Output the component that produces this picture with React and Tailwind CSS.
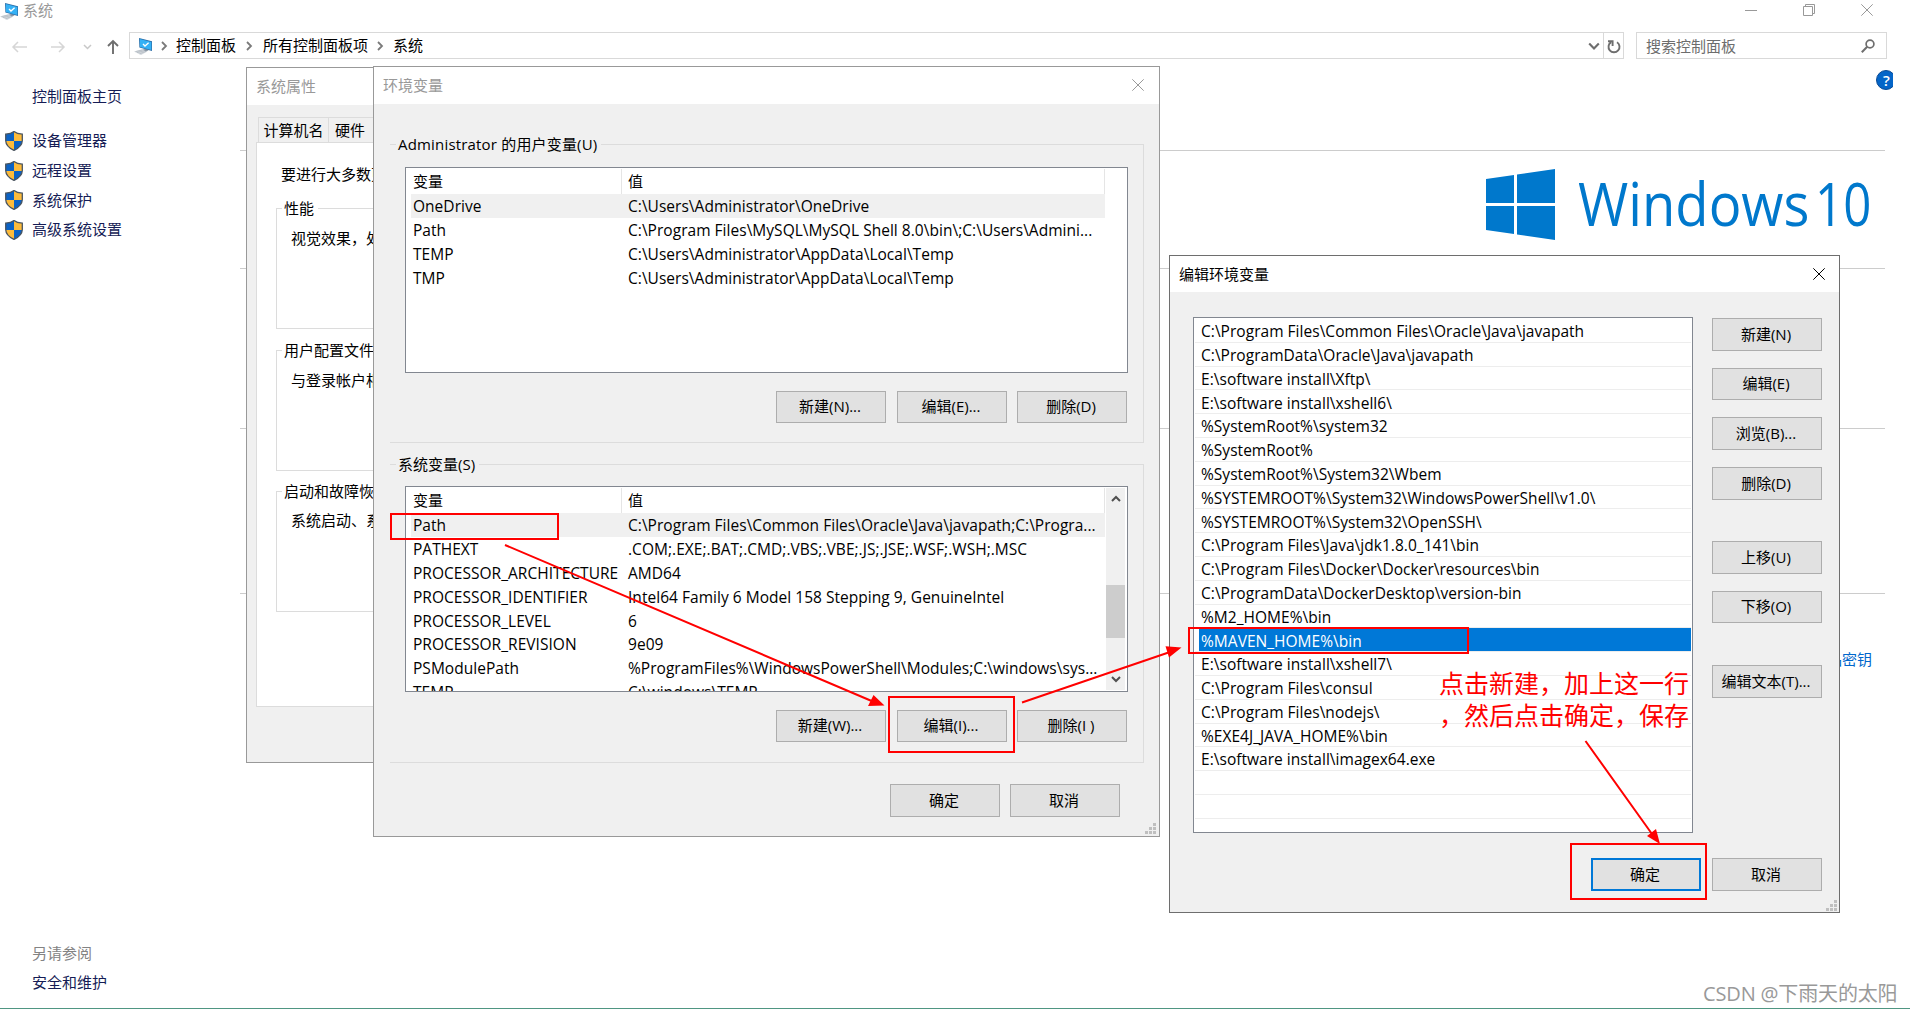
const USER_VARS = [
  ["OneDrive", "C:\\Users\\Administrator\\OneDrive"],
  ["Path", "C:\\Program Files\\MySQL\\MySQL Shell 8.0\\bin\\;C:\\Users\\Admini..."],
  ["TEMP", "C:\\Users\\Administrator\\AppData\\Local\\Temp"],
  ["TMP", "C:\\Users\\Administrator\\AppData\\Local\\Temp"],
];

const SYSTEM_VARS = [
  ["Path", "C:\\Program Files\\Common Files\\Oracle\\Java\\javapath;C:\\Progra..."],
  ["PATHEXT", ".COM;.EXE;.BAT;.CMD;.VBS;.VBE;.JS;.JSE;.WSF;.WSH;.MSC"],
  ["PROCESSOR_ARCHITECTURE", "AMD64"],
  ["PROCESSOR_IDENTIFIER", "Intel64 Family 6 Model 158 Stepping 9, GenuineIntel"],
  ["PROCESSOR_LEVEL", "6"],
  ["PROCESSOR_REVISION", "9e09"],
  ["PSModulePath", "%ProgramFiles%\\WindowsPowerShell\\Modules;C:\\windows\\sys..."],
  ["TEMP", "C:\\windows\\TEMP"],
];

const PATHS = [
  "C:\\Program Files\\Common Files\\Oracle\\Java\\javapath",
  "C:\\ProgramData\\Oracle\\Java\\javapath",
  "E:\\software install\\Xftp\\",
  "E:\\software install\\xshell6\\",
  "%SystemRoot%\\system32",
  "%SystemRoot%",
  "%SystemRoot%\\System32\\Wbem",
  "%SYSTEMROOT%\\System32\\WindowsPowerShell\\v1.0\\",
  "%SYSTEMROOT%\\System32\\OpenSSH\\",
  "C:\\Program Files\\Java\\jdk1.8.0_141\\bin",
  "C:\\Program Files\\Docker\\Docker\\resources\\bin",
  "C:\\ProgramData\\DockerDesktop\\version-bin",
  "%M2_HOME%\\bin",
  "%MAVEN_HOME%\\bin",
  "E:\\software install\\xshell7\\",
  "C:\\Program Files\\consul",
  "C:\\Program Files\\nodejs\\",
  "%EXE4J_JAVA_HOME%\\bin",
  "E:\\software install\\imagex64.exe",
  "",
  "",
];

const TASKS = ["设备管理器", "远程设置", "系统保护", "高级系统设置"];

function ComputerIcon({ className }) {
  return (
    <svg viewBox="0 0 19 18" className={className}>
      <path d="M0 13.5 9 11l4.5 2.5L7 17z" fill="#d3d8dd" />
      <path d="M1.5 13.6 8.5 12M3 14.6l7-1.8M5.5 15.8l6-2.2" stroke="#aab2ba" strokeWidth=".6" />
      <path d="M9 11.5 13 10.5l1.5 2-3 1z" fill="#8b98a5" />
      <path d="M5 0 18 3.2V13L5.4 9.6z" fill="#2b6ea8" />
      <path d="M5.8 1 17.3 3.9V12L6 8.9z" fill="#35b1f5" />
      <path d="M9 6l2 2 3.6-3.2" fill="none" stroke="#fff" strokeWidth="1.3" />
    </svg>
  );
}

function ShieldIcon() {
  return (
    <svg viewBox="0 0 18 20" className="h-5 w-[18px] shrink-0">
      <defs>
        <clipPath id="shield">
          <path d="M9 .6C11 2.2 13.600 3 17.300 3.200V9.500C17.200 14 13.500 17.300 9 19.400 4.500 17.300.8 14 .7 9.500V3.200C4.400 3 7 2.200 9 .6z" />
        </clipPath>
      </defs>
      <g clipPath="url(#shield)">
        <path d="M0 0h9v10H0z" fill="#0b62c4" />
        <path d="M9 0h9v10H9z" fill="#fdbb3a" />
        <path d="M0 10h9v10H0z" fill="#fdbb3a" />
        <path d="M9 10h9v10H9z" fill="#0b62c4" />
      </g>
      <path
        d="M9 .6C11 2.2 13.600 3 17.300 3.200V9.500C17.200 14 13.500 17.300 9 19.400 4.500 17.300.8 14 .7 9.500V3.200C4.400 3 7 2.200 9 .6z"
        fill="none"
        stroke="#4a5560"
        strokeWidth="1.3"
      />
    </svg>
  );
}

function CloseIcon({ className }) {
  return (
    <svg viewBox="0 0 12 12" className={className} fill="none" stroke="currentColor">
      <path d="M.3.3 11.700 11.700M11.700.3.3 11.700" />
    </svg>
  );
}

function Chevron({ className, width = 1.8 }) {
  return (
    <svg viewBox="0 0 10 10" className={className} fill="none" stroke="currentColor" strokeWidth={width}>
      <path d="M3 1l4 4-4 4" />
    </svg>
  );
}

function Grip({ className }) {
  return (
    <svg viewBox="0 0 11 11" className={className} fill="#bfbfbf">
      <path d="M8 0h3v3H8zM4 4h3v3H4zM8 4h3v3H8zM0 8h3v3H0zM4 8h3v3H4zM8 8h3v3H8z" />
    </svg>
  );
}

function Button({ children, className = "h-8" }) {
  return (
    <button
      type="button"
      className={`flex w-[110px] shrink-0 items-center justify-center border border-[#adadad] bg-[#e1e1e1] pr-[2px] pb-px whitespace-pre ${className}`}
    >
      {children}
    </button>
  );
}

function GroupBox({ label, left, className, children }) {
  const side = left ? "border-l" : "";
  return (
    <div className={`flex flex-col ${className}`}>
      <div className="flex h-5 shrink-0 items-center">
        <span className={`h-[10px] w-[6px] shrink-0 self-end border-t border-[#dcdcdc] ${side}`} />
        <span className="px-[2px] leading-5 whitespace-nowrap">{label}</span>
        <span className="ml-[2px] h-[10px] flex-1 self-end border-t border-r border-[#dcdcdc]" />
      </div>
      <div className={`flex-1 border-r border-b border-[#dcdcdc] ${side}`}>{children}</div>
    </div>
  );
}

function VariableList({ rows, scroll, className }) {
  return (
    <div className={`flex h-[206px] w-[723px] overflow-hidden border border-[#828790] bg-white p-px ${className}`}>
      <div className="w-[698px]">
        <div className="flex h-[25px] items-center">
          <span className="flex h-full w-[215px] items-center border-r border-[#e5e5e5] pl-[6px]">变量</span>
          <span className="flex h-full flex-1 items-center border-r border-[#e5e5e5] pl-[6px]">值</span>
        </div>
        {rows.map(([name, value], i) => (
          <div
            key={name}
            className={`ml-1 flex h-[23.850px] items-center pt-[2px] text-[15.500px] tracking-[0.03px] ${
              i === 0 ? "bg-[#f0f0f0]" : ""
            }`}
          >
            <span className="w-[217px] shrink-0 pl-[2px] whitespace-nowrap">{name}</span>
            <span className="whitespace-nowrap">{value}</span>
          </div>
        ))}
      </div>
      {scroll && (
        <div className="ml-[1px] flex w-[19px] flex-col items-center bg-[#f0f0f0] text-[#505050]">
          <Chevron className="mt-[6px] h-[10px] w-[10px] -rotate-90" width={2} />
          <div className="mt-[81px] h-[53px] w-full bg-[#cdcdcd]" />
          <Chevron className="mt-[36px] h-[10px] w-[10px] rotate-90" width={2} />
        </div>
      )}
    </div>
  );
}

function TitleBar() {
  return (
    <div className="flex h-[20px] items-center text-[#999999]">
      <ComputerIcon className="mt-[3px] h-[18px] w-[19px]" />
      <span className="ml-1">系统</span>
      <div className="mr-[37px] ml-auto flex items-center gap-[46px]">
        <span className="h-px w-3 bg-[#999999]" />
        <svg viewBox="0 0 12 12" className="h-3 w-3" fill="none" stroke="#999999">
          <path d="M.5 2.500h9v9h-9zM2.500 2.500v-2h9v9h-2" />
        </svg>
        <CloseIcon className="h-3 w-3" />
      </div>
    </div>
  );
}

function AddressBar() {
  return (
    <div className="mt-[12px] flex h-[27px] items-center">
      <svg viewBox="0 0 110 20" className="ml-[10px] h-5 w-[110px] shrink-0" fill="none" strokeWidth="1.5">
        <path d="M17 11H3M8 6l-5 5 5 5" stroke="#d6d6d6" />
        <path d="M41 11h13M49 6l5 5-5 5" stroke="#d6d6d6" />
        <path d="M74 9l3.500 3.500L81 9" stroke="#c8c8c8" />
        <path d="M103 18V5M98 10l5-5 5 5" stroke="#6e6e6e" strokeWidth="1.9" />
      </svg>
      <div className="ml-[9px] flex h-full w-[1495px] shrink-0 items-center border border-[#d9d9d9] text-black">
        <ComputerIcon className="mt-[3px] ml-[4px] h-[18px] w-[19px]" />
        <Chevron className="ml-[6px] h-[10px] w-[10px] text-[#7a7a7a]" />
        <span className="ml-[7px]">控制面板</span>
        <Chevron className="ml-[8px] h-[10px] w-[10px] text-[#7a7a7a]" />
        <span className="ml-[9px]">所有控制面板项</span>
        <Chevron className="ml-[7px] h-[10px] w-[10px] text-[#7a7a7a]" />
        <span className="ml-[8px]">系统</span>
        <Chevron className="mt-px mr-[3px] ml-auto h-[12px] w-[12px] rotate-90 text-[#6e6e6e]" />
        <div className="flex h-full w-[20px] items-center justify-center border-l border-[#d9d9d9]">
          <svg viewBox="0 0 14 14" className="mt-[3px] h-[14px] w-[14px]" fill="none" stroke="#6e6e6e" strokeWidth="1.9">
            <path d="M10 2.200A5.500 5.500 0 1 1 4.200 2.100" />
            <path d="M1 1.300h4.600V6" />
          </svg>
        </div>
      </div>
      <div className="ml-3 flex h-full w-[251px] shrink-0 items-center border border-[#d9d9d9] text-[#6d6d6d]">
        <span className="mt-px ml-[9px]">搜索控制面板</span>
        <svg viewBox="0 0 14 14" className="mr-[11px] ml-auto h-[14px] w-[14px]" fill="none" stroke="#6e6e6e">
          <circle cx="9" cy="5" r="3.900" strokeWidth="1.700" />
          <path d="M6.200 7.800.8 13.200" strokeWidth="2" />
        </svg>
      </div>
    </div>
  );
}

function Sidebar() {
  return (
    <aside className="flex h-[949px] w-[240px] flex-col text-[#151c55]">
      <div className="mt-[26px] pl-8 leading-[22px]">控制面板主页</div>
      <div className="mt-[19px] flex flex-col">
        {TASKS.map((task) => (
          <div key={task} className="flex h-[29.700px] items-center pl-[5px]">
            <ShieldIcon />
            <span className="ml-[9px]">{task}</span>
          </div>
        ))}
      </div>
      <div className="mt-auto mb-[15px] flex flex-col gap-[7px] pl-8 leading-[22px]">
        <span className="text-[#838383]">另请参阅</span>
        <span>安全和维护</span>
      </div>
    </aside>
  );
}

function SystemContent() {
  return (
    <main className="flex flex-1 flex-col">
      <div className="mt-[11px] mr-[17px] flex h-5 w-[17px] items-center self-end overflow-hidden">
        <span className="flex h-5 w-5 shrink-0 items-center justify-center rounded-full border border-[#0a4a94] bg-[#0465c8] pl-px text-[15px] font-semibold text-white">
          ?
        </span>
      </div>
      <div className="mr-[25px] flex flex-col">
        <div className="mt-[60px] flex h-[118px] justify-end border-t border-[#cccccc]">
          <svg viewBox="0 0 69 71" className="mt-[18px] h-[71px] w-[69px]" fill="#0078cc">
            <path d="M0 10l28-4v28H0zM31 5.600 69 0v34H31zM0 37h28v28L0 61zM31 37h38v34l-38-5.600z" />
          </svg>
          <svg viewBox="0 0 306 80" className="mt-[15px] ml-[24px] h-20 w-[306px]" fill="#0078cc" fontSize="60">
            <text transform="translate(-1 60) scale(.907 1)">Windows</text>
            <text transform="translate(236 60) scale(.82 1)">10</text>
          </svg>
        </div>
        <div className="h-[160px] border-t border-[#cccccc]" />
        <div className="h-[165px] border-t border-[#cccccc]" />
        <div className="flex justify-end border-t border-[#cccccc] pt-[58px] pr-[13px] text-[#0066cc]">更改产品密钥</div>
      </div>
    </main>
  );
}

function SystemProperties() {
  return (
    <div className="absolute top-[67px] left-[246px] flex h-[696px] w-[400px] flex-col border border-[#999999] bg-[#f0f0f0]">
      <div className="flex h-[37px] shrink-0 items-center bg-white pl-[9px] text-[#999999]">系统属性</div>
      <div className="mt-3 ml-[11px] flex h-[25px] shrink-0">
        <span className="flex w-[71px] items-center justify-center border border-b-0 border-[#dcdcdc]">计算机名</span>
        <span className="flex w-[50px] items-center border-t border-[#dcdcdc] pl-[6px]">硬件</span>
      </div>
      <div className="ml-[9px] flex h-[565px] flex-col border border-[#dcdcdc] bg-white">
        <div className="mt-[20px] pl-6 leading-[22px]">要进行大多数更</div>
        <GroupBox label="性能" left className="mt-[13px] ml-[19px] h-[131px]">
          <div className="pt-[9px] pl-[14px] leading-[22px]">视觉效果，处</div>
        </GroupBox>
        <GroupBox label="用户配置文件" left className="mt-[11px] ml-[19px] h-[131px]">
          <div className="pt-[9px] pl-[14px] leading-[22px]">与登录帐户相</div>
        </GroupBox>
        <GroupBox label="启动和故障恢" left className="mt-[10px] ml-[19px] h-[131px]">
          <div className="pt-[8px] pl-[14px] leading-[22px]">系统启动、系</div>
        </GroupBox>
      </div>
    </div>
  );
}

function EnvironmentVariables() {
  return (
    <div className="absolute top-[66px] left-[373px] flex h-[771px] w-[787px] flex-col border border-[#999999] bg-[#f0f0f0]">
      <div className="flex h-[37px] shrink-0 items-center justify-between bg-white pr-[15px] pl-[9px] text-[#999999]">
        <span>环境变量</span>
        <CloseIcon className="mb-px h-3 w-3" />
      </div>
      <GroupBox
        label={<span className="tracking-[0.180px]">Administrator 的用户变量(U)</span>}
        className="mt-[30px] ml-4 h-[309px] w-[754px]"
      >
        <VariableList rows={USER_VARS} className="mt-[13px] ml-[15px]" />
        <div className="mt-[18px] flex justify-end gap-[10px] pr-4">
          <Button className="mr-px h-8">新建(N)...</Button>
          <Button>编辑(E)...</Button>
          <Button>删除(D)</Button>
        </div>
      </GroupBox>
      <GroupBox label="系统变量(S)" className="mt-[11px] ml-4 h-[309px] w-[754px]">
        <VariableList rows={SYSTEM_VARS} scroll className="mt-[12px] ml-[15px]" />
        <div className="mt-[18px] flex justify-end gap-[10px] pr-4">
          <Button className="mr-px h-8">新建(W)...</Button>
          <Button>编辑(I)...</Button>
          <Button>删除(I )</Button>
        </div>
      </GroupBox>
      <div className="mt-[21px] flex justify-end gap-[10px] pr-[39px]">
        <Button className="h-[33px]">确定</Button>
        <Button className="h-[33px]">取消</Button>
      </div>
      <Grip className="mt-[6px] mr-[3px] h-[11px] w-[11px] self-end" />
    </div>
  );
}

function EditVariable() {
  return (
    <div className="absolute top-[255px] left-[1169px] flex h-[658px] w-[671px] flex-col border border-[#6e6e6e] bg-[#f0f0f0]">
      <div className="flex h-9 shrink-0 items-center justify-between bg-white pr-[14px] pl-[9px]">
        <span>编辑环境变量</span>
        <CloseIcon className="h-3 w-3" />
      </div>
      <div className="mt-[25px] ml-[23px] flex">
        <div className="h-[516px] w-[500px] overflow-hidden border border-[#828790] bg-white px-px pt-px text-[15.500px] tracking-[0.030px]">
          {PATHS.map((path, i) => (
            <div key={i} className="h-[23.800px] border-b border-[#ededed]">
              <div
                className={`ml-1 flex h-full items-center pt-[3px] pl-[2px] whitespace-nowrap ${
                  path.startsWith("%MAVEN") ? "bg-[#0078d7] text-white" : ""
                }`}
              >
                {path}
              </div>
            </div>
          ))}
        </div>
        <div className="mt-px ml-[19px] flex flex-col">
          <Button className="h-[33px]">新建(N)</Button>
          <Button className="mt-[17px] h-8">编辑(E)</Button>
          <Button className="mt-[17px] h-[33px]">浏览(B)...</Button>
          <Button className="mt-[17px] h-[33px]">删除(D)</Button>
          <Button className="mt-[41px] h-[33px]">上移(U)</Button>
          <Button className="mt-[17px] h-8">下移(O)</Button>
          <Button className="mt-[42px] h-[33px]">编辑文本(T)...</Button>
        </div>
      </div>
      <div className="mt-[25px] flex justify-end gap-[11px] pr-[17px]">
        <Button className="h-[33px] outline-2 -outline-offset-2 outline-[#0078d7]">确定</Button>
        <Button className="h-[33px]">取消</Button>
      </div>
      <Grip className="mt-[9px] mr-[2px] h-[11px] w-[11px] self-end" />
    </div>
  );
}

// Red boxes, arrows and the note lie over the windows
function Annotations() {
  return (
    <>
      <div className="absolute top-[513px] left-[390px] h-[27px] w-[169px] border-2 border-[#ff0000]" />
      <div className="absolute top-[696px] left-[888px] h-[57px] w-[127px] border-2 border-[#ff0000]" />
      <div className="absolute top-[627px] left-[1188px] h-[27px] w-[281px] border-2 border-[#ff0000]" />
      <div className="absolute top-[843px] left-[1570px] h-[57px] w-[137px] border-2 border-[#ff0000]" />
      <svg viewBox="0 0 1910 1012" className="absolute top-0 left-0 h-[1012px] w-[1910px]" fill="#ff0000">
        <path d="M505 545 874 702M1022 702.500 1170 652M1585.500 741 1652 834" stroke="#ff0000" strokeWidth="2" />
        <path d="M884.500 705.500 873.500 695 868 706zM1181.500 647.500 1165.500 646.300 1169 657.500zM1660 844 1656 829 1647 836z" />
      </svg>
      <div className="absolute top-[667px] left-[1439px] w-[256px] text-[25px] leading-8 whitespace-nowrap text-[#ff0000]">
        <div>点击新建，加上这一行</div>
        <div>，然后点击确定，保存</div>
      </div>
      <div className="absolute top-[979px] left-[1703px] text-[20px] leading-[30px] tracking-[-0.150px] whitespace-nowrap text-[#999999]">
        CSDN @下雨天的太阳
      </div>
    </>
  );
}

export default function App() {
  return (
    <div className="relative h-[1012px] w-[1910px] overflow-hidden bg-white font-['Open_Sans','Noto_Sans_CJK_SC',sans-serif] text-[15px] leading-none text-black">
      <div className="h-[1009px] border-b border-[#4f9682]">
        <TitleBar />
        <AddressBar />
        <div className="flex">
          <Sidebar />
          <SystemContent />
        </div>
      </div>
      <SystemProperties />
      <EnvironmentVariables />
      <EditVariable />
      <Annotations />
    </div>
  );
}
